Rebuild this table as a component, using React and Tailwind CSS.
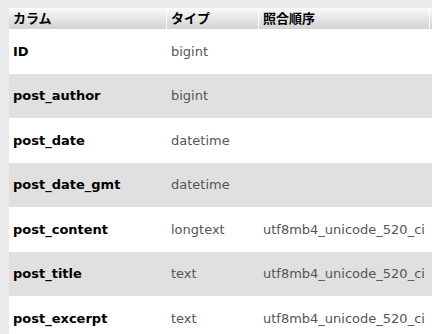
import React from 'react';

const rows = [
    { name: "ID", type: "bigint", coll: "" },
    { name: "post_author", type: "bigint", coll: "" },
    { name: "post_date", type: "datetime", coll: "" },
    { name: "post_date_gmt", type: "datetime", coll: "" },
    { name: "post_content", type: "longtext", coll: "utf8mb4_unicode_520_ci" },
    { name: "post_title", type: "text", coll: "utf8mb4_unicode_520_ci" },
    { name: "post_excerpt", type: "text", coll: "utf8mb4_unicode_520_ci" },
];

const App = () => {
    return (
        <div
            className="w-[432px] h-[334px] overflow-hidden bg-[#ebebeb] pl-[9px] pt-[8px]"
            style={{ fontFamily: '"DejaVu Sans", "Noto Sans CJK JP", sans-serif' }}
        >
            <div className="w-[460px]">
                <div className="flex h-[21px] bg-gradient-to-b from-[#fafafa] to-[#d2d2d2] text-[13px] font-bold text-black">
                    <div className="w-[157px] px-[4px] flex items-center">カラム</div>
                    <div className="w-[92px] px-[4px] flex items-center border-l border-white">タイプ</div>
                    <div className="w-[171px] px-[4px] flex items-center border-l border-white">照合順序</div>
                    <div className="flex-1 border-l border-white"></div>
                </div>
                {rows.map((row, i) => (
                    <div
                        key={row.name}
                        className={`flex h-[44.5px] items-center text-[13px] ${i % 2 === 0 ? "bg-white" : "bg-[#e0e0e0]"}`}
                    >
                        <div className="w-[157px] px-[4px] font-bold text-black">{row.name}</div>
                        <div className="w-[92px] px-[5px] text-[#555]">{row.type}</div>
                        <div className="w-[171px] px-[5px] text-[#555] whitespace-nowrap">{row.coll}</div>
                    </div>
                ))}
            </div>
        </div>
    );
};

export default App;
